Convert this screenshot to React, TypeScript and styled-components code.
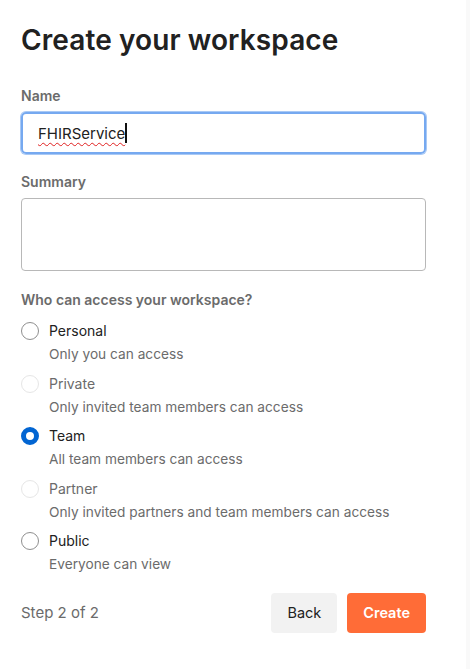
import React from "react";
import styled, { createGlobalStyle } from "styled-components";

const Global = createGlobalStyle`
  html, body { margin: 0; padding: 0; background: #ffffff; }
  body { font-family: Inter, "Noto Sans", sans-serif; color: #212121; }
  * { box-sizing: border-box; }
`;

const Page = styled.div`
  display: flex;
  width: 470px;
  height: 669px;
  overflow: hidden;
`;

const Main = styled.main`
  flex: 1;
  padding: 22px 40px 0 21px;
  display: flex;
  flex-direction: column;
`;

const Rail = styled.div`
  width: 4px;
  background: #f9f9f9;
`;

const Title = styled.h1`
  margin: 0;
  font-size: 28px;
  line-height: 36px;
  font-weight: 600;
  color: #212121;
  letter-spacing: 0.1px;
`;

const Field = styled.div<{ $top: number }>`
  display: flex;
  flex-direction: column;
  margin-top: ${(p) => p.$top}px;
`;

const Label = styled.label`
  font-size: 14px;
  line-height: 20px;
  font-weight: 600;
  color: #6b6b6b;
  margin-bottom: 6px;
`;

const NameInput = styled.div`
  height: 42px;
  border: 2px solid #76a9f0;
  border-radius: 5px;
  box-shadow: 0 0 0 1px #a9c9f5;
  display: flex;
  align-items: center;
  padding-left: 15px;
  font-size: 15px;
  color: #212121;
`;

const Spell = styled.span`
  text-decoration: underline wavy #e02020;
  text-decoration-thickness: 1px;
  text-underline-offset: 3px;
`;

const Caret = styled.span`
  display: inline-block;
  width: 2px;
  height: 20px;
  background: #111;
  vertical-align: middle;
`;

const Summary = styled.div`
  height: 73px;
  border: 1px solid #b8b8b8;
  border-radius: 4px;
`;

const Options = styled.div`
  display: flex;
  flex-direction: column;
`;

const Option = styled.div`
  display: grid;
  grid-template-columns: 18px 1fr;
  column-gap: 10px;
  row-gap: 3px;
  padding: 5px 0 4.5px;
`;

const Radio = styled.span<{ $state: "on" | "off" | "disabled" }>`
  width: 18px;
  height: 18px;
  border-radius: 50%;
  align-self: center;
  border: ${(p) =>
    p.$state === "on"
      ? "5px solid #0265d2"
      : p.$state === "disabled"
      ? "1px solid #e6e6e6"
      : "1px solid #8f8f8f"};
  background: #fff;
`;

const OptTitle = styled.span<{ $muted?: boolean }>`
  font-size: 14px;
  line-height: 20px;
  font-weight: 400;
  color: ${(p) => (p.$muted ? "#6b6b6b" : "#212121")};
`;

const OptDesc = styled.span`
  grid-column: 2;
  font-size: 13.7px;
  line-height: 20px;
  color: #6b6b6b;
`;

const Footer = styled.div`
  display: flex;
  align-items: center;
  margin-top: 14px;
  gap: 10px;
`;

const Step = styled.span`
  flex: 1;
  font-size: 15px;
  color: #6b6b6b;
`;

const Button = styled.button<{ $primary?: boolean }>`
  height: 40px;
  padding: 0 16px;
  border: none;
  border-radius: 4px;
  font-family: inherit;
  font-size: 14.5px;
  font-weight: ${(p) => (p.$primary ? 600 : 400)};
  background: ${(p) => (p.$primary ? "#ff6c37" : "#f2f2f2")};
  color: ${(p) => (p.$primary ? "#ffffff" : "#212121")};
`;

const options: { title: string; desc: string; state: "on" | "off" | "disabled" }[] = [
  { title: "Personal", desc: "Only you can access", state: "off" },
  { title: "Private", desc: "Only invited team members can access", state: "disabled" },
  { title: "Team", desc: "All team members can access", state: "on" },
  { title: "Partner", desc: "Only invited partners and team members can access", state: "disabled" },
  { title: "Public", desc: "Everyone can view", state: "off" },
];

export default function App() {
  return (
    <>
      <Global />
      <Page>
        <Main>
          <Title>Create your workspace</Title>
          <Field $top={28}>
            <Label>Name</Label>
            <NameInput>
              <Spell>FHIRService</Spell>
              <Caret />
            </NameInput>
          </Field>
          <Field $top={18}>
            <Label>Summary</Label>
            <Summary />
          </Field>
          <Field $top={19}>
            <Label>Who can access your workspace?</Label>
          </Field>
          <Options>
            {options.map((o) => (
              <Option key={o.title}>
                <Radio $state={o.state} />
                <OptTitle $muted={o.state === "disabled"}>{o.title}</OptTitle>
                <OptDesc>{o.desc}</OptDesc>
              </Option>
            ))}
          </Options>
          <Footer>
            <Step>Step 2 of 2</Step>
            <Button>Back</Button>
            <Button $primary>Create</Button>
          </Footer>
        </Main>
        <Rail />
      </Page>
    </>
  );
}
